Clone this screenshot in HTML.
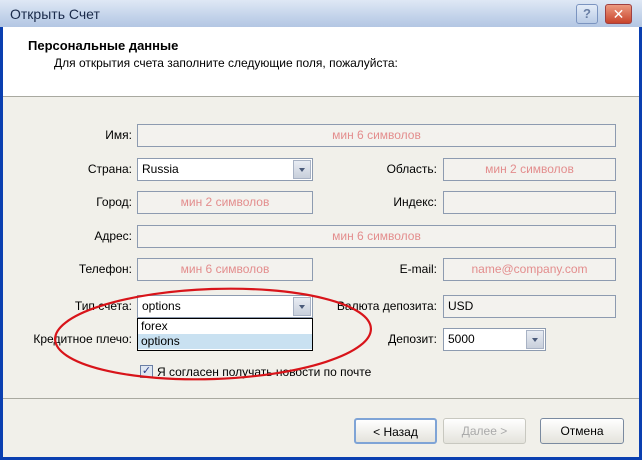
<!DOCTYPE html><html><head><meta charset="utf-8"><style>
*{margin:0;padding:0;box-sizing:border-box}
body{width:642px;height:460px;overflow:hidden;background:#0a3fb0;font-family:"Liberation Sans","DejaVu Sans",sans-serif;font-size:12px;color:#000;position:relative}
.a{position:absolute}
.title{left:0;top:0;width:642px;height:27px;background:linear-gradient(#dfe8f5,#c3d3ea 60%,#b3c6e3);color:#1a2a4a;font-size:14px;padding:6px 0 0 10px}
.win{left:3px;top:27px;width:636px;height:430px;background:#f1f0ea}
.hdr{left:3px;top:27px;width:636px;height:70px;background:#fff;border-bottom:1px solid #a9a9a0}
.f{position:absolute;height:23px;border:1px solid #8d9bb0;background:#f3f2ee;color:#e38d8d;text-align:center;line-height:21px;font-size:12px}
.w{background:#fff;color:#000;text-align:left;padding-left:4px}
.l{position:absolute;text-align:right;font-size:12px;line-height:23px}
.dd{position:absolute;right:1px;top:1px;width:18px;height:19px;background:linear-gradient(#e8ecf3,#c8cfdb);border:1px solid #a8b2c4}
.dd:after{content:"";position:absolute;left:5px;top:7px;border:3.5px solid transparent;border-top:4px solid #4a5a7a}
.btn{position:absolute;top:418px;height:26px;border:1px solid #7a8aa0;border-radius:3px;background:linear-gradient(#fff,#e4e3dc);text-align:center;line-height:24px;font-size:12px}
</style></head><body>
<div class="a title">Открыть Счет</div>
<div class="a" style="left:576px;top:4px;width:22px;height:20px;border:1px solid #7b94c0;border-radius:3px;background:linear-gradient(#e4ecf8,#b9cbe6);text-align:center;color:#6a7fa5;font-weight:bold;font-size:13px;line-height:18px">?</div>
<div class="a" style="left:605px;top:4px;width:27px;height:20px;border:1px solid #a04040;border-radius:3px;background:linear-gradient(#ec9a80,#c8442c);text-align:center;color:#fff;font-weight:bold;font-size:14px;line-height:18px">✕</div>
<div class="a win"></div>
<div class="a hdr"></div>
<div class="a" style="left:28px;top:38px;font-weight:bold;font-size:13px">Персональные данные</div>
<div class="a" style="left:54px;top:56px;font-size:12px">Для открытия счета заполните следующие поля, пожалуйста:</div>

<div class="l" style="left:0;width:132px;top:124px">Имя:</div>
<div class="f" style="left:137px;top:124px;width:479px">мин 6 символов</div>

<div class="l" style="left:0;width:132px;top:158px">Страна:</div>
<div class="f w" style="left:137px;top:158px;width:176px">Russia<div class="dd"></div></div>
<div class="l" style="left:300px;width:137px;top:158px">Область:</div>
<div class="f" style="left:443px;top:158px;width:173px">мин 2 символов</div>

<div class="l" style="left:0;width:132px;top:191px">Город:</div>
<div class="f" style="left:137px;top:191px;width:176px">мин 2 символов</div>
<div class="l" style="left:300px;width:137px;top:191px">Индекс:</div>
<div class="f" style="left:443px;top:191px;width:173px"></div>

<div class="l" style="left:0;width:132px;top:225px">Адрес:</div>
<div class="f" style="left:137px;top:225px;width:479px">мин 6 символов</div>

<div class="l" style="left:0;width:132px;top:258px">Телефон:</div>
<div class="f" style="left:137px;top:258px;width:176px">мин 6 символов</div>
<div class="l" style="left:300px;width:137px;top:258px">E-mail:</div>
<div class="f" style="left:443px;top:258px;width:173px">name@company.com</div>

<div class="l" style="left:0;width:132px;top:295px">Тип счета:</div>
<div class="f w" style="left:137px;top:295px;width:176px;background:#fff">options<div class="dd"></div></div>
<div class="l" style="left:300px;width:137px;top:295px">Валюта депозита:</div>
<div class="f w" style="left:443px;top:295px;width:173px;background:#f3f2ee">USD</div>

<div class="l" style="left:0;width:132px;top:328px">Кредитное плечо:</div>
<div class="a" style="left:137px;top:318px;width:176px;height:33px;border:1px solid #000;background:#fff;line-height:15px;padding-left:3px">forex<div style="margin-left:-3px;padding-left:3px;background:#c9e1f1">options</div></div>
<div class="l" style="left:300px;width:137px;top:328px">Депозит:</div>
<div class="f w" style="left:443px;top:328px;width:103px">5000<div class="dd"></div></div>

<div class="a" style="left:140px;top:365px;width:13px;height:13px;border:1px solid #6a7fa5;background:#dfe7f2;color:#2a3f8a;font-size:11px;line-height:11px;text-align:center">✓</div>
<div class="a" style="left:157px;top:365px">Я согласен получать новости по почте</div>

<div class="a" style="left:3px;top:398px;width:636px;border-top:1px solid #a9a9a0"></div>
<div class="btn" style="left:354px;width:83px;border:2px solid #7fa4d6">&lt; Назад</div>
<div class="btn" style="left:443px;width:83px;color:#aaa;border-color:#c8c8c0">Далее &gt;</div>
<div class="btn" style="left:540px;width:84px">Отмена</div>

<svg class="a" style="left:0;top:0" width="642" height="460"><ellipse cx="213" cy="334" rx="158" ry="45" fill="none" stroke="#d8141a" stroke-width="2.2" transform="rotate(-2 213 334)"/></svg>
</body></html>
